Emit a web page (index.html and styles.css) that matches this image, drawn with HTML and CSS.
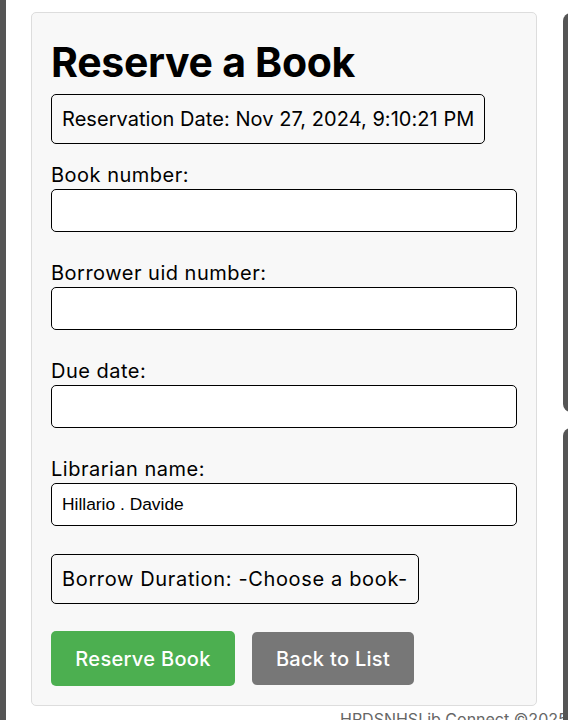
FILE: index.html
```html
<!DOCTYPE html>
<html lang="en">
<head>
<meta charset="utf-8">
<title>Reserve a Book</title>
<link rel="stylesheet" href="styles.css">
</head>
<body>
<div class="layout">
  <aside class="sidebar"></aside>
  <main class="main">
    <section class="card">
      <h1 class="title">Reserve a Book</h1>
      <div class="info-box date">Reservation Date: Nov 27, 2024, 9:10:21 PM</div>
      <form class="form">
        <div class="field">
          <label class="label" for="book">Book number:</label>
          <input class="input" id="book" type="text">
        </div>
        <div class="field">
          <label class="label" for="uid">Borrower uid number:</label>
          <input class="input" id="uid" type="text">
        </div>
        <div class="field">
          <label class="label" for="due">Due date:</label>
          <input class="input" id="due" type="text">
        </div>
        <div class="field">
          <label class="label" for="lib">Librarian name:</label>
          <input class="input" id="lib" type="text" value="Hillario . Davide">
        </div>
        <div class="info-box duration">Borrow Duration: -Choose a book-</div>
        <div class="actions">
          <button class="btn btn-green" type="button">Reserve Book</button>
          <button class="btn btn-gray" type="button">Back to List</button>
        </div>
      </form>
    </section>
    <footer class="footer">HPDSNHSLib Connect ©2025</footer>
  </main>
  <aside class="rightbar">
    <div class="panel panel-top"></div>
    <div class="panel panel-bottom"></div>
  </aside>
</div>
</body>
</html>
```

FILE: styles.css
```css
html, body {
  margin: 0;
  padding: 0;
  background: #ffffff;
  overflow: hidden;
}

body {
  font-family: Inter, "Noto Sans", "DejaVu Sans", sans-serif;
  color: #000;
}

.layout {
  display: flex;
  height: 720px;
  width: 568px;
  overflow: hidden;
}

.sidebar {
  flex: 0 0 6px;
  background: #555555;
}

.main {
  flex: 0 0 557px;
  width: 557px;
  min-width: 0;
  padding: 12px 26px 0 25px;
  box-sizing: border-box;
}

.card {
  background: #f8f8f8;
  border: 1px solid #dddddd;
  border-radius: 5px;
  padding: 19px 19px 19px 19px;
}

.title {
  margin: 6px 0 8px 0;
  font-size: 41px;
  line-height: 48px;
  font-weight: 700;
  letter-spacing: -0.3px;
}

.info-box {
  display: inline-block;
  border: 1px solid #000;
  border-radius: 5px;
  padding: 12px 10px;
  font-size: 20px;
  line-height: 24px;
  background: transparent;
}

.date {
  letter-spacing: 0.05px;
}

.form {
  display: flex;
  flex-direction: column;
  align-items: flex-start;
  margin-top: 18px;
}

.field {
  display: flex;
  flex-direction: column;
  width: 100%;
}

.field + .field {
  margin-top: 28px;
}

.label {
  font-size: 20px;
  line-height: 26px;
  margin-bottom: 1px;
  letter-spacing: 0.5px;
}

.input {
  box-sizing: border-box;
  width: 100%;
  height: 43px;
  margin: 0;
  border: 1px solid #000;
  border-radius: 5px;
  background: #fff;
  padding: 0 10px;
  font-family: "Liberation Sans", Arial, sans-serif;
  font-size: 17.4px;
  color: #000;
}

.duration {
  margin-top: 28px;
  letter-spacing: 0.65px;
}

.actions {
  display: flex;
  align-items: center;
  gap: 17px;
  margin-top: 27px;
}

.btn {
  border: none;
  border-radius: 5px;
  color: #fff;
  font-family: Inter, "Noto Sans", sans-serif;
  font-size: 20px;
  font-weight: 500;
  letter-spacing: 0.3px;
  padding: 0;
  cursor: pointer;
}

.btn-green {
  background: #4caf50;
  width: 184px;
  height: 55px;
}

.btn-gray {
  background: #777777;
  width: 162px;
  height: 53px;
}

.footer {
  margin-top: 3px;
  padding-left: 309px;
  white-space: nowrap;
  font-size: 16px;
  line-height: 20px;
  color: #666;
}

.rightbar {
  flex: 0 0 60px;
  display: flex;
  flex-direction: column;
  gap: 16px;
  padding-top: 13px;
}

.panel {
  flex: 0 0 auto;
  background: #555555;
  border-radius: 8px;
}

.panel-top {
  height: 399px;
}

.panel-bottom {
  height: 320px;
}
```
